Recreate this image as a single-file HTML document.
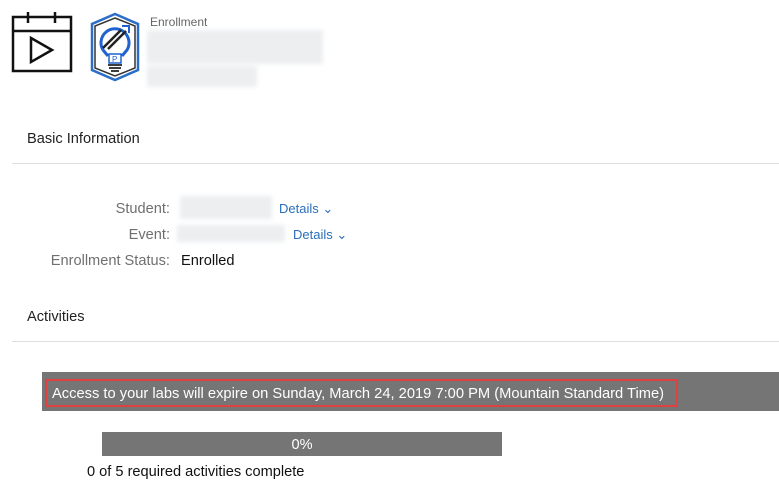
<!DOCTYPE html>
<html><head><style>
body{margin:0;width:779px;height:501px;background:#fff;font-family:"Liberation Sans",sans-serif;position:relative;overflow:hidden;color:#222}
.a{position:absolute;white-space:nowrap}
.lbl{color:#6f6f6f;font-size:14.6px;text-align:right;width:170px;left:0}
.det{color:#2a6ebb;font-size:13px}
.blur{background:#eceef0;filter:blur(2px)}
</style></head><body>
<svg class="a" style="left:11px;top:11px" width="63" height="63" viewBox="0 0 63 63">
<rect x="2" y="6" width="58" height="54" fill="none" stroke="#111" stroke-width="2.5"/>
<line x1="2" y1="20" x2="60" y2="20" stroke="#111" stroke-width="2.5"/>
<line x1="17" y1="1" x2="17" y2="12" stroke="#111" stroke-width="2.5"/>
<line x1="44" y1="1" x2="44" y2="12" stroke="#111" stroke-width="2.5"/>
<path d="M20 27 L41 39 L20 51 Z" fill="none" stroke="#111" stroke-width="2.5"/>
</svg>
<svg class="a" style="left:89px;top:12px" width="52" height="70" viewBox="0 0 52 70">
<path d="M26 2 L49 12 L49 58 L26 68 L3 58 L3 12 Z" fill="#fff" stroke="#2a6ec8" stroke-width="2.5"/>
<path d="M26 6 L46 14 L46 56 L26 64 L6 56 L6 14 Z" fill="none" stroke="#333" stroke-width="1.5"/>
<path d="M14 38 A14 14 0 1 1 38 38 L33 44 M14 38 L19 44" fill="none" stroke="#1f62d0" stroke-width="3"/>
<path d="M14 36 L32 18 M19 37 L37 19" stroke="#222" stroke-width="2.5"/>
<path d="M33 14 L40 14 L40 21" fill="none" stroke="#1f62d0" stroke-width="2"/>
<rect x="20" y="42" width="12" height="9" fill="#fff" stroke="#1f62d0" stroke-width="1.5"/>
<text x="23" y="50" font-size="8" font-family="Liberation Sans" fill="#1f62d0">P</text>
<path d="M19 53 H33 M20 56 H32 M22 59 H30" stroke="#222" stroke-width="1.8"/>
</svg>
<div class="a" style="left:150px;top:15px;font-size:12px;color:#666">Enrollment</div>
<div class="a blur" style="left:147px;top:30px;width:176px;height:34px"></div>
<div class="a blur" style="left:147px;top:66px;width:110px;height:21px"></div>
<div class="a" style="left:27px;top:131px;font-size:14.6px">Basic Information</div>
<div class="a" style="left:12px;top:163px;width:767px;height:1px;background:#ddd"></div>
<div class="a lbl" style="top:201px">Student:</div>
<div class="a blur" style="left:180px;top:196px;width:92px;height:23px"></div>
<div class="a det" style="left:279px;top:201px">Details &#8964;</div>
<div class="a lbl" style="top:227px">Event:</div>
<div class="a blur" style="left:177px;top:225px;width:108px;height:17px"></div>
<div class="a det" style="left:293px;top:227px">Details &#8964;</div>
<div class="a lbl" style="top:253px">Enrollment Status:</div>
<div class="a" style="left:181px;top:253px;font-size:14.6px;color:#111">Enrolled</div>
<div class="a" style="left:27px;top:309px;font-size:14.6px">Activities</div>
<div class="a" style="left:12px;top:341px;width:767px;height:1px;background:#ddd"></div>
<div class="a" style="left:42px;top:372px;width:737px;height:39px;background:#757575"></div>
<div class="a" style="left:45px;top:379px;width:624px;height:24px;border:2px solid #e04040;color:#fff;font-size:14.7px;line-height:26px;padding-left:5px">Access to your labs will expire on Sunday, March 24, 2019 7:00 PM (Mountain Standard Time)</div>
<div class="a" style="left:102px;top:432px;width:400px;height:24px;background:#757575;color:#fff;font-size:14.6px;line-height:26px;text-align:center">0%</div>
<div class="a" style="left:87px;top:464px;font-size:14.6px;color:#111">0 of 5 required activities complete</div>
</body></html>
